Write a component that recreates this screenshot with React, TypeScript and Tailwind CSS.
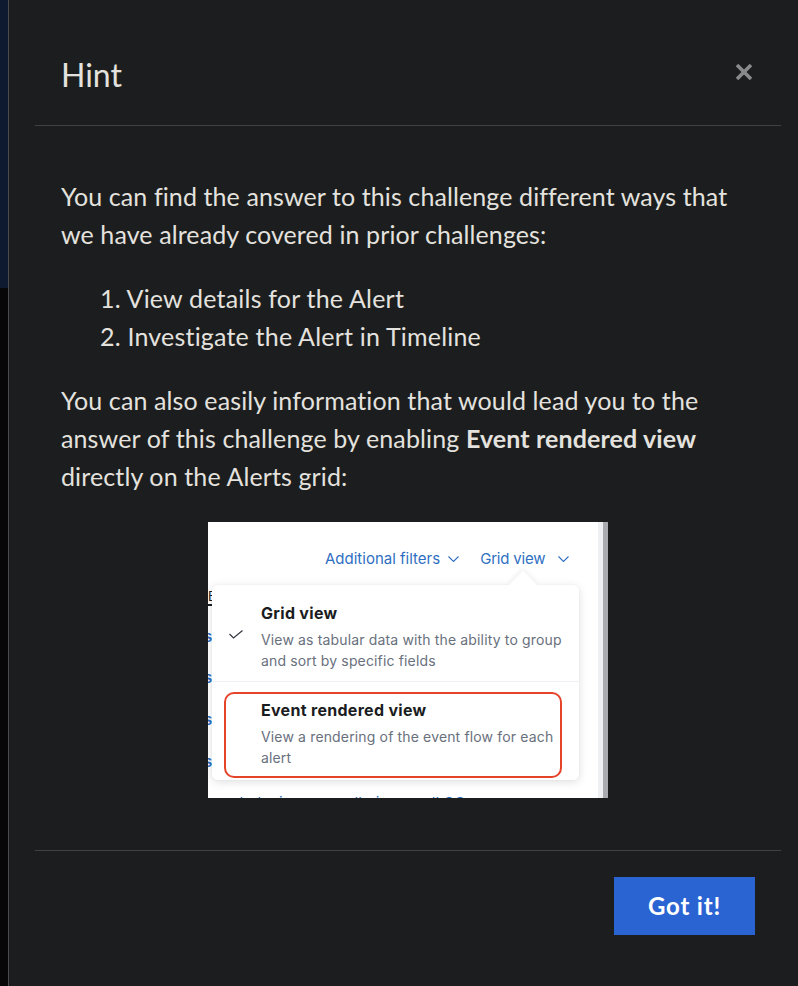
import React from "react";

const lato = { fontFamily: "Lato, 'Noto Sans', sans-serif" };
const inter = { fontFamily: "Inter, 'Noto Sans', sans-serif" };

function Chevron({ className }: { className?: string }) {
  return (
    <svg className={className} width="11" height="6" viewBox="0 0 11 6" fill="none">
      <path d="M0.5 0.5 L5.5 5.5 L10.5 0.5" stroke="#2f6fc2" strokeWidth="1.1" />
    </svg>
  );
}

function Screenshot() {
  return (
    <div className="relative h-[276px] w-[400px] overflow-hidden bg-white" style={inter}>
      {/* right edge strips */}
      <div className="absolute right-0 top-0 flex h-full">
        <div className="h-full w-[5px] bg-[#eef0f2]" />
        <div className="h-full w-[5px] bg-[#a9abb1]" />
      </div>
      {/* left fragments behind popover */}
      <div className="absolute left-0 top-[68px] text-[13px] leading-none text-[#1a1c21]">E.</div>
      <div className="absolute left-0 top-[82px] h-[2px] w-[4px] bg-[#1a1c21]" />
      <div className="absolute left-[-4px] top-[107px] text-[15px] font-semibold leading-none text-[#2f6fc2]">s</div>
      <div className="absolute left-[-4px] top-[148px] text-[15px] font-semibold leading-none text-[#2f6fc2]">s</div>
      <div className="absolute left-[-4px] top-[190px] text-[15px] font-semibold leading-none text-[#2f6fc2]">s</div>
      <div className="absolute left-[-4px] top-[232px] text-[15px] font-semibold leading-none text-[#2f6fc2]">s</div>
      <div className="absolute left-[26px] top-[273px] text-[15px] leading-none text-[#2f6fc2]">dedepi unexpr edheis ooo ulLCC</div>

      {/* top bar */}
      <div className="absolute left-[117px] top-[27px] flex items-center text-[15px] leading-5 text-[#2f6fc2]">
        <span>Additional filters</span>
        <Chevron className="ml-[8px]" />
        <span className="ml-[21px] tracking-[-0.2px]">Grid view</span>
        <Chevron className="ml-[13px]" />
      </div>

      {/* popover */}
      <div className="absolute left-[4px] top-[63px] h-[195px] w-[367px] rounded-[6px] bg-white shadow-[0_2px_10px_rgba(0,0,0,0.13),0_0_2px_rgba(0,0,0,0.06)]">
        <div className="absolute left-[301px] top-[-10px] h-[20px] w-[20px] rotate-45 bg-white shadow-[-2px_-2px_5px_rgba(0,0,0,0.06)]" />
        <div className="relative flex h-full flex-col rounded-[6px] bg-white">
          <div className="relative border-b border-[#edf0f4] pb-[10px] pl-[49px] pr-2 pt-[18px]">
            <svg className="absolute left-[17px] top-[45px]" width="14" height="9" viewBox="0 0 14 9" fill="none">
              <path d="M0.5 4 L4.5 8 L13.5 0.5" stroke="#343741" strokeWidth="1.2" />
            </svg>
            <div className="text-[16px] font-bold leading-5 tracking-[0.3px] text-[#1a1c21]">Grid view</div>
            <div className="mt-[6px] text-[14px] leading-[21px] tracking-[0.15px] text-[#69707d]">
              View as tabular data with the ability to group and sort by specific fields
            </div>
          </div>
          <div className="ml-[12px] mr-[17px] mt-[10px] h-[86px] rounded-[10px] border-[2.5px] border-[#e5432a] pl-[35px] pr-1 pt-[6px]">
            <div className="text-[16px] font-bold leading-5 tracking-[0.3px] text-[#1a1c21]">Event rendered view</div>
            <div className="mt-[6px] text-[14px] leading-[21px] tracking-[0.15px] text-[#69707d]">
              View a rendering of the event flow for each alert
            </div>
          </div>
        </div>
      </div>
    </div>
  );
}

export default function App() {
  return (
    <div className="flex h-[986px] w-[798px] overflow-hidden bg-[#1c1d1f]" style={lato}>
      <div className="flex w-[8px] shrink-0 flex-col">
        <div className="h-[288px] bg-[#0e1a30]" />
        <div className="flex-1 bg-[#070707]" />
      </div>
      <div className="w-px shrink-0 bg-[#4a4b4d]" />
      <div className="w-[798px] shrink-0 px-[26px]">
        <div className="flex h-[126px] items-start justify-between border-b border-[#414244] pl-[26px] pr-[28px] pt-[55px]">
          <h1 className="text-[32px] leading-10 text-[#e4e2de]">Hint</h1>
          <svg className="mt-[8px]" width="18" height="18" viewBox="0 0 18 18" fill="none">
            <path d="M2 2 L16 16 M16 2 L2 16" stroke="#8a8a8a" strokeWidth="3.6" />
          </svg>
        </div>
        <div className="border-b border-[#414244] px-[26px] pb-[52px] pt-[51px] text-[25px] leading-[38px] text-[#e4e2de]">
          <p className="mb-[26px] tracking-[0.1px]">
            You can find the answer to this challenge different ways that we have already covered in prior challenges:
          </p>
          <div className="mb-[26px] pl-[39px] tracking-[0.2px]">
            <div>1. View details for the Alert</div>
            <div>2. Investigate the Alert in Timeline</div>
          </div>
          <p className="mb-[27px] tracking-[0.12px]">
            You can also easily information that would lead you to the answer of this challenge by enabling{" "}
            <b className="font-bold">Event rendered view</b> directly on the Alerts grid:
          </p>
          <div className="flex justify-center">
            <Screenshot />
          </div>
        </div>
        <div className="flex justify-end pr-[26px] pt-[26px]">
          <button className="h-[58px] w-[141px] bg-[#2a64d2] text-[24px] font-bold tracking-[0.8px] text-white">
            Got it!
          </button>
        </div>
      </div>
    </div>
  );
}
